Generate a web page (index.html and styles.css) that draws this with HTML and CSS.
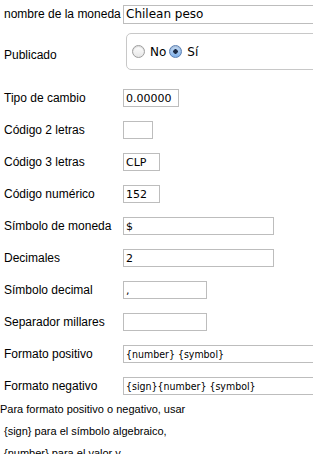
FILE: index.html
```html
<!DOCTYPE html>
<html lang="es">

<head>
    <meta charset="UTF-8">
    <meta name="viewport" content="width=device-width, initial-scale=1.0">
    <title>Moneda</title>
    <link rel="stylesheet" href="styles.css">
</head>

<body>
    <form class="currency">
        <div class="row row--first">
            <label for="name">nombre de la moneda</label>
            <input class="field field--name" id="name" type="text" value="Chilean peso">
        </div>
        <div class="row row--publish">
            <label>Publicado</label>
            <fieldset class="radios">
                <label class="radio"><input type="radio" name="published" value="0"> No</label>
                <label class="radio"><input type="radio" name="published" value="1" checked> Sí</label>
            </fieldset>
        </div>
        <div class="row">
            <label for="rate">Tipo de cambio</label>
            <input class="field field--rate" id="rate" type="text" value="0.00000">
        </div>
        <div class="row">
            <label for="code2">Código 2 letras</label>
            <input class="field field--code2" id="code2" type="text" value="">
        </div>
        <div class="row">
            <label for="code3">Código 3 letras</label>
            <input class="field field--code3" id="code3" type="text" value="CLP">
        </div>
        <div class="row">
            <label for="numeric">Código numérico</label>
            <input class="field field--code3" id="numeric" type="text" value="152">
        </div>
        <div class="row">
            <label for="symbol">Símbolo de moneda</label>
            <input class="field field--wide" id="symbol" type="text" value="$">
        </div>
        <div class="row">
            <label for="decimals">Decimales</label>
            <input class="field field--wide" id="decimals" type="text" value="2">
        </div>
        <div class="row">
            <label for="decsym">Símbolo decimal</label>
            <input class="field field--mid" id="decsym" type="text" value=",">
        </div>
        <div class="row">
            <label for="thousands">Separador millares</label>
            <input class="field field--mid" id="thousands" type="text" value="">
        </div>
        <div class="row">
            <label for="posformat">Formato positivo</label>
            <input class="field field--full" id="posformat" type="text" value="{number} {symbol}">
        </div>
        <div class="row">
            <label for="negformat">Formato negativo</label>
            <input class="field field--full" id="negformat" type="text" value="{sign}{number} {symbol}">
        </div>
        <div class="help">
            <p>Para formato positivo o negativo, usar</p>
            <p class="help__item">{sign} para el símbolo algebraico,</p>
            <p class="help__item">{number} para el valor y</p>
        </div>
    </form>
</body>

</html>
```

FILE: styles.css
```css
body {
    margin: 0;
    font-family: "Liberation Sans", Arial, sans-serif;
    font-size: 12px;
    color: #000;
    background: #fff;
    overflow: hidden;
}

.currency {
    width: 340px;
}

.row {
    display: flex;
    align-items: center;
    height: 32px;
}

.row > label {
    width: 123px;
    flex-shrink: 0;
    box-sizing: border-box;
    padding-left: 4px;
}

.row--first {
    height: 28px;
}

.row--publish {
    height: 54px;
    align-items: flex-start;
}

.row--publish > label {
    align-self: center;
}

.field {
    box-sizing: border-box;
    height: 18px;
    margin: 0;
    padding: 0 2px;
    border: 1px solid #bdbdbd;
    font-family: "DejaVu Sans", Verdana, sans-serif;
    font-size: 11px;
    color: #000;
    outline: none;
}

.field--name {
    height: 19px;
    width: 200px;
    font-size: 12px;
}

.field--rate {
    width: 56px;
}

.field--code2 {
    width: 30px;
}

.field--code3 {
    width: 37px;
}

.field--wide {
    width: 151px;
}

.field--mid {
    width: 84px;
}

.field--full {
    width: 200px;
    font-family: "DejaVu Sans Condensed", "DejaVu Sans", sans-serif;
    font-size: 10.5px;
}

.radios {
    display: flex;
    align-items: center;
    box-sizing: border-box;
    width: 200px;
    height: 37px;
    margin: 5px 0 0 3px;
    padding: 0 0 0 4px;
    border: 1px solid #c8c8c8;
    border-radius: 5px;
}

.radio {
    display: flex;
    align-items: center;
    font-family: "DejaVu Sans", Verdana, sans-serif;
    font-size: 12px;
    margin-right: 2px;
}

.radio input {
    appearance: none;
    -webkit-appearance: none;
    width: 13px;
    height: 13px;
    margin: 0 5px 0 1px;
    border: 1px solid #9d9d9d;
    border-radius: 50%;
    background: linear-gradient(#ffffff, #e6e6e6);
    box-shadow: inset 0 1px 1px rgba(0, 0, 0, 0.15);
}

.radio input:checked {
    border-color: #5a7fb4;
    background: radial-gradient(circle, #1c2c46 0 2px, transparent 2.5px),
        linear-gradient(#c6dcf6, #7fb0e8);
}

.help {
    margin-top: -4px;
    line-height: 22px;
    font-size: 11px;
}

.help p {
    margin: 0;
}

.help__item {
    padding-left: 4px;
}
```
